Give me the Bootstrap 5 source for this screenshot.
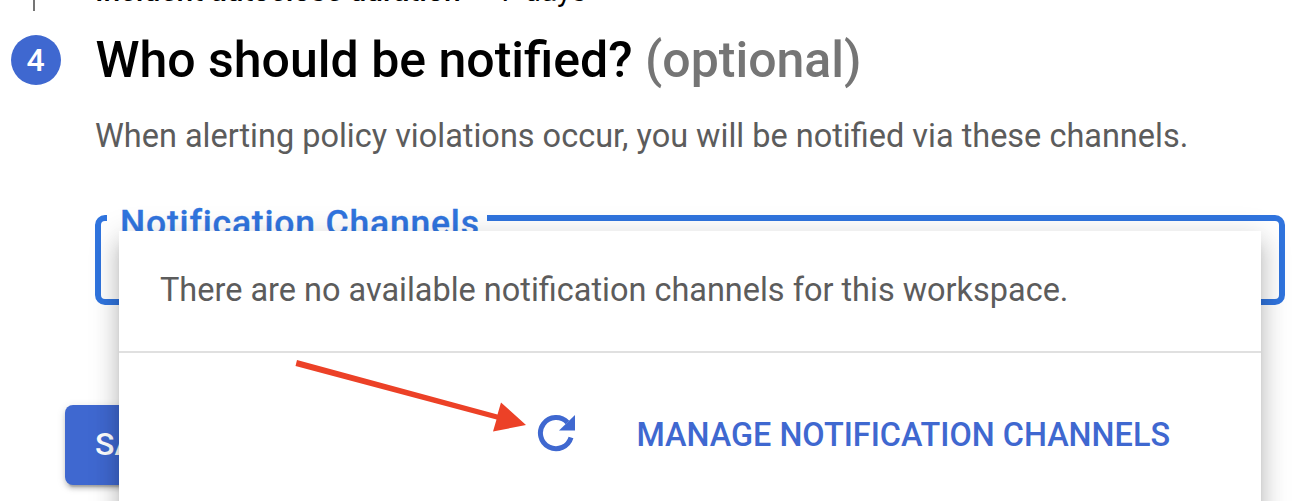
<!DOCTYPE html>
<html lang="en">
<head>
<meta charset="utf-8">
<title>Create alerting policy</title>
<link rel="stylesheet" href="https://cdn.jsdelivr.net/npm/bootstrap@5.3.0/dist/css/bootstrap.min.css">
<style>
html{overflow:hidden}
body{font-family:Roboto,sans-serif;color:#000;background:#fff;height:501px;overflow:hidden}
.step-rail{width:96px;flex:none}
.rail-line{width:2px;height:11px;margin-left:33px;background:#757575}
.step-dot{width:50px;height:50px;margin:24px 0 0 11px;padding-right:1px;background:#3f68d0;font-size:32px;font-weight:500}
.prev-row{height:11px;font-size:30px;line-height:40px;gap:39px}
.prev-row span{margin-top:-29px}
.prev-key{font-weight:500;margin-left:-1px}
.step-title{font-size:50px;line-height:60px;font-weight:500;margin:19px 0 0 -.5px}
.step-title span{color:#757575}
.step-desc{font-size:32.48px;line-height:40px;color:#5c5c5c;margin:26px 0 0 -1px}
.field-box{margin:47px 0 0 -1px;width:1190px;height:102px;border:6px solid #3074de;border-radius:10px;padding:0 0 0 6px}
.field-box legend{float:none;width:380px;white-space:nowrap;margin:0;padding:8px 0 0 13px;font-size:35.5px;line-height:24px;height:30px;font-weight:500;letter-spacing:.8px;-webkit-text-stroke:.3px #3074de;color:#3074de}
.save-btn{position:relative;margin:100px 0 0 -31px;height:80px;width:150px;padding:0 0 2px 30px;border-radius:8px;background:#3f68d0;color:#fff;font-size:32px;line-height:78px;font-weight:500;border:0;text-align:left;box-shadow:0 6px 2px -4px rgba(0,0,0,.2),0 4px 4px rgba(0,0,0,.14),0 2px 10px rgba(0,0,0,.12)}
.channel-menu{left:119px;top:231px;width:1142px;height:300px;background:#fff;box-shadow:0 10px 10px -6px rgba(0,0,0,.2),0 16px 20px 2px rgba(0,0,0,.14),0 6px 28px 4px rgba(0,0,0,.12)}
.menu-empty{height:122px;border-bottom:2px solid #e0e0e0;padding:39px 0 0 41px;font-size:32.46px;line-height:40px;color:#5c5c5c}
.menu-actions{height:162px;padding-right:91px;gap:60px;color:#3f68d0;font-size:32.4px;font-weight:500}
.menu-actions svg{margin-bottom:2px}
.menu-actions span{padding-top:2px}
.arrow-note{left:290px;top:350px}
</style>
</head>
<body>
<div class="d-flex">
  <div class="step-rail">
    <div class="rail-line"></div>
    <div class="step-dot rounded-circle text-white d-flex align-items-center justify-content-center">4</div>
  </div>
  <main>
    <div class="prev-row d-flex"><span class="prev-key">Incident autoclose duration</span><span>7 days</span></div>
    <h2 class="step-title text-nowrap">Who should be notified? <span>(optional)</span></h2>
    <p class="step-desc text-nowrap">When alerting policy violations occur, you will be notified via these channels.</p>
    <fieldset class="field-box"><legend>Notification Channels</legend></fieldset>
    <button class="save-btn" type="button">SAVE</button>
  </main>
</div>
<div class="channel-menu position-absolute">
  <div class="menu-empty">There are no available notification channels for this workspace.</div>
  <div class="menu-actions d-flex align-items-center justify-content-end">
    <svg width="40" height="40" viewBox="536 413 40 40" fill="none"><path d="M567.5 422.5A15.6 15.6 0 1 0 571 437.5" stroke="currentColor" stroke-width="5"/><path d="M575 415v15.6h-16z" fill="currentColor"/></svg>
    <span>MANAGE NOTIFICATION CHANNELS</span>
  </div>
</div>
<svg class="arrow-note position-absolute" width="240" height="90" viewBox="290 350 240 90"><path d="M295.5 366 297 360 497.5 414.5 501 402.5 526 425 493 431.5 496.5 419.5z" fill="#ec4127"/></svg>
<script src="https://cdn.jsdelivr.net/npm/bootstrap@5.3.0/dist/js/bootstrap.bundle.min.js"></script>
</body>
</html>
